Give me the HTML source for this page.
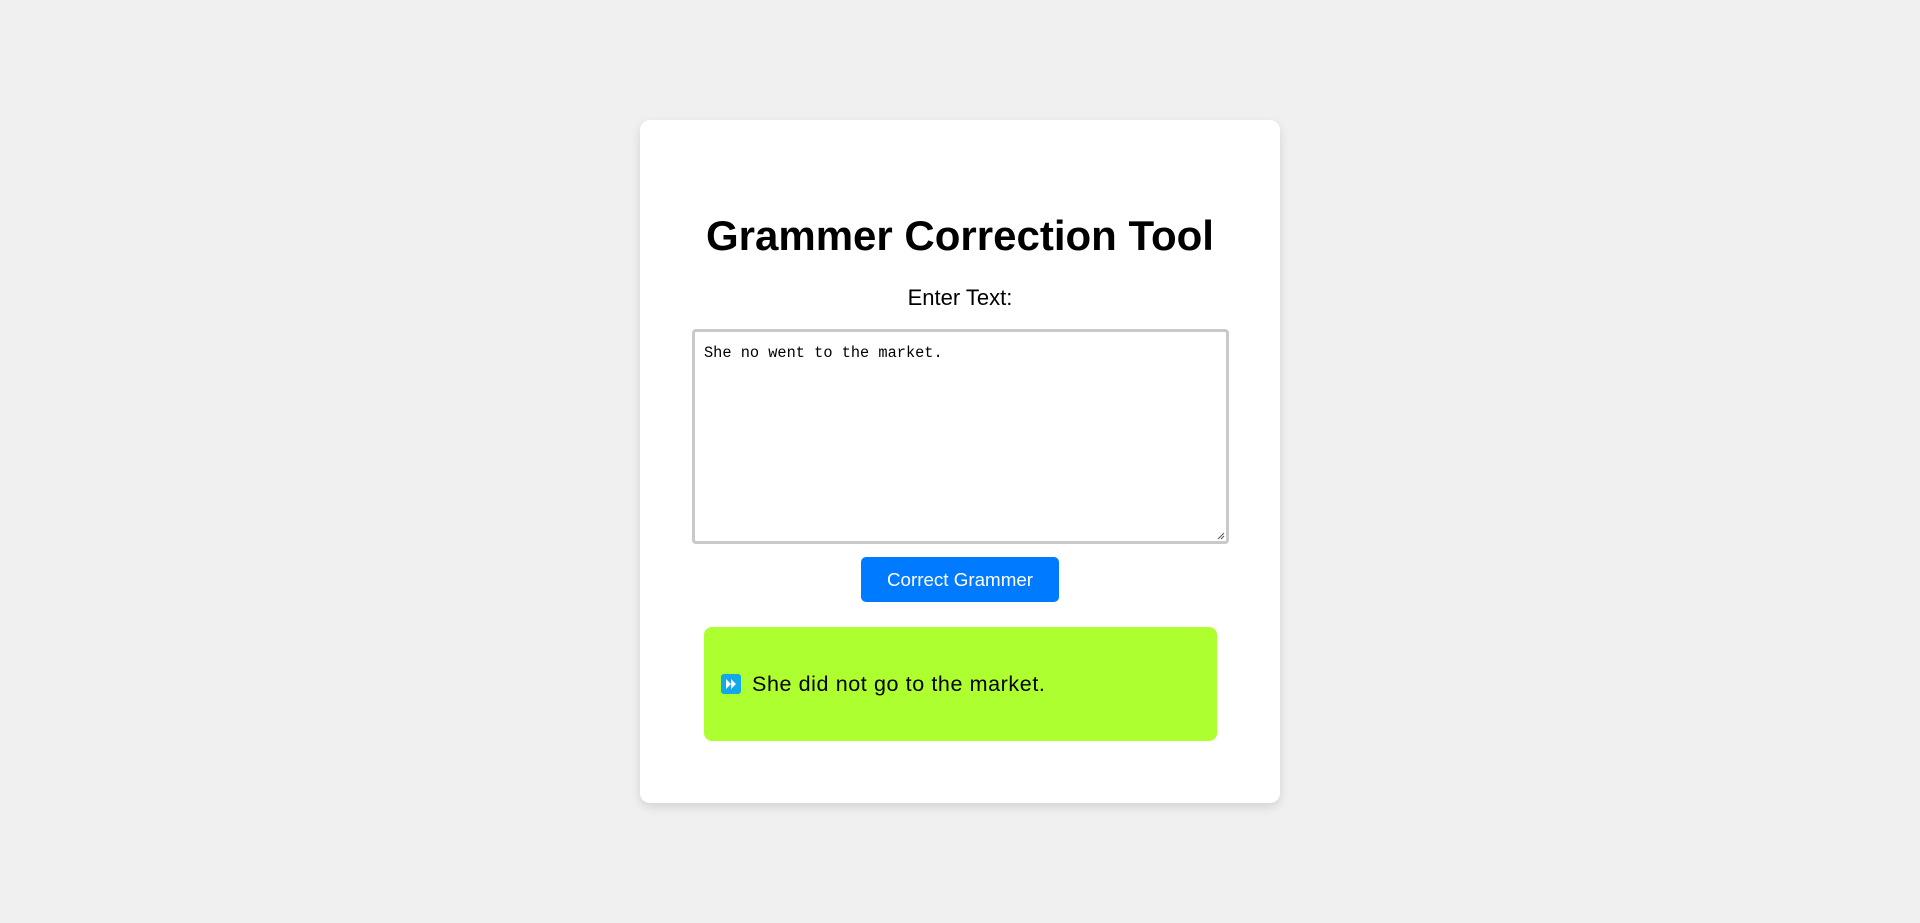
<!DOCTYPE html>
<html><head><meta charset="utf-8"><style>
html,body{margin:0;padding:0;background:#f0f0f0;width:1920px;height:923px;overflow:hidden;font-family:"Liberation Sans",sans-serif;}
.card{position:absolute;left:640px;top:120px;width:640px;height:683px;background:#fff;border-radius:10px;box-shadow:0 4px 10px rgba(0,0,0,0.12);}
h1{position:absolute;left:0;width:640px;top:92px;margin:0;text-align:center;font-size:42px;font-weight:bold;color:#000;line-height:48px;}
.lbl{position:absolute;left:0;width:640px;top:165px;text-align:center;font-size:22px;line-height:26px;color:#000;}
.ta{position:absolute;left:52px;top:209px;width:531px;height:209px;border:3px solid #c9c9c9;border-radius:4px;background:#fff;}
.ta span{position:absolute;left:9px;top:12px;font-family:"Liberation Mono",monospace;font-size:15.3px;color:#000;}
.grip{position:absolute;right:1px;bottom:1px;width:8px;height:8px;}
.btn{position:absolute;left:221px;top:437px;width:198px;height:45px;background:#007bff;border-radius:5px;color:#fff;font-size:18.8px;line-height:45px;text-align:center;}
.res{position:absolute;left:64px;top:507px;width:513px;height:114px;background:#adff2f;border-radius:8px;}
.ic{position:absolute;left:17px;top:47px;width:20px;height:20px;background:#13a9e9;border-radius:3px;}
.rt{position:absolute;left:48px;top:44px;font-size:21.5px;letter-spacing:0.6px;line-height:26px;color:#000;}
</style></head><body>
<div class="card">
<h1>Grammer Correction Tool</h1>
<div class="lbl">Enter Text:</div>
<div class="ta"><span>She no went to the market.</span>
<svg class="grip" viewBox="0 0 8 8"><path d="M1 7L7 1M4 7L7 4" stroke="#555" stroke-width="1"/></svg></div>
<div class="btn">Correct Grammer</div>
<div class="res"><div class="ic"><svg width="20" height="20" viewBox="0 0 20 20"><path d="M5 5L10 10L5 15ZM10 5L15 10L10 15Z" fill="#fff"/></svg></div><div class="rt">She did not go to the market.</div></div>
</div>
</body></html>
